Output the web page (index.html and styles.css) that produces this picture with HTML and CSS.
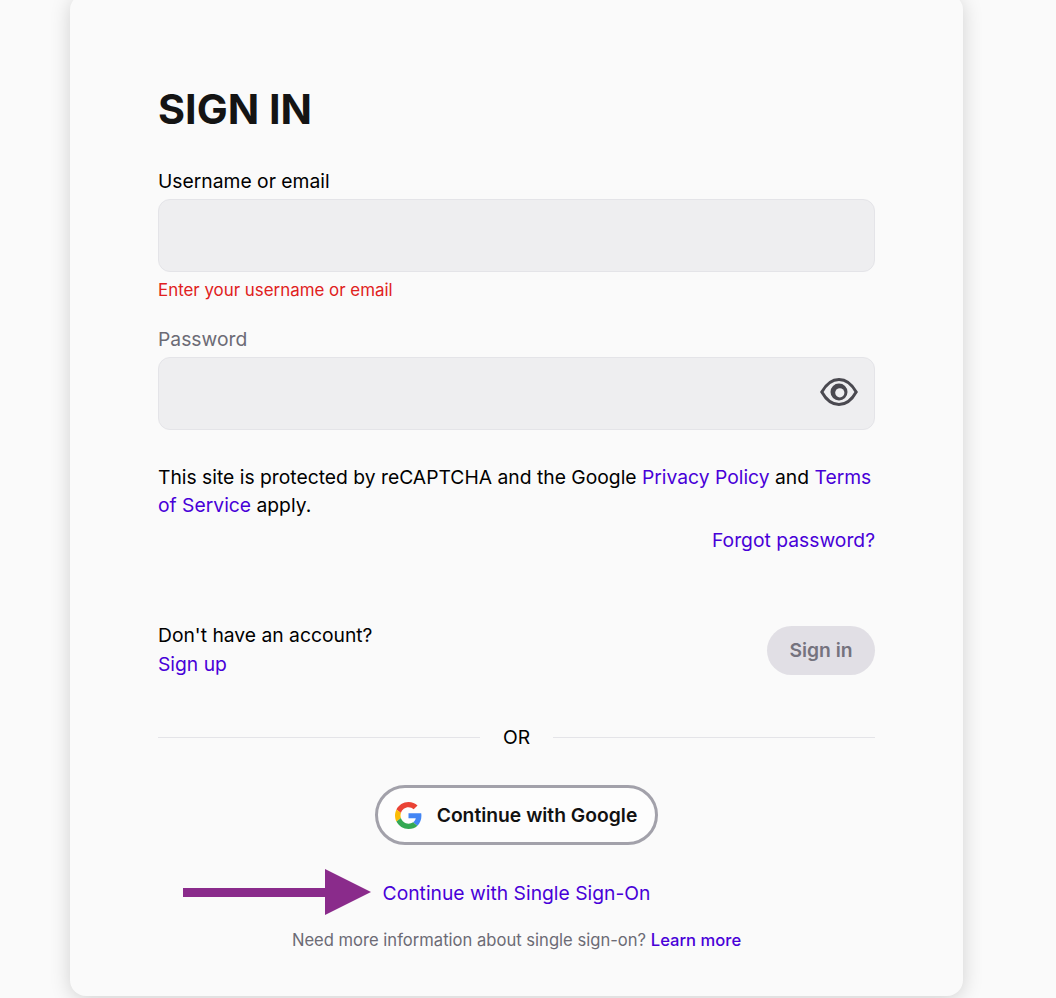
FILE: index.html
```html
<!DOCTYPE html>
<html lang="en">
<head>
    <meta charset="UTF-8">
    <meta name="viewport" content="width=device-width, initial-scale=1.0">
    <title>Sign in</title>
    <link rel="stylesheet" href="styles.css">
</head>
<body>
    <div class="container">
        <div class="card">
            <h1 class="card-title">SIGN IN</h1>

            <form class="login-form">
                <div class="form-group">
                    <label class="form-label" for="username">Username or email</label>
                    <input type="text" class="form-control" id="username">
                    <div class="form-error">Enter your username or email</div>
                </div>

                <div class="form-group">
                    <label class="form-label form-label-muted" for="password">Password</label>
                    <div class="password-box">
                        <input type="password" class="form-control" id="password">
                        <svg class="eye-icon" width="38" height="30" viewBox="0 0 38 30" fill="none" stroke="#4a4950" stroke-width="3">
                            <path d="M1.8 15 C6 7.500 12 2.500 19 2.500 C26 2.500 32 7.500 36.2 15 C32 22.500 26 27.500 19 27.500 C12 27.500 6 22.500 1.800 15 Z"></path>
                            <circle cx="19" cy="15" r="7" fill="#4a4950"></circle>
                            <circle cx="19.800" cy="15.800" r="4.600" fill="#eeeef0" stroke="none"></circle>
                        </svg>
                    </div>
                </div>

                <p class="recaptcha-note">This site is protected by reCAPTCHA and the Google <a href="#">Privacy Policy</a> and <a href="#">Terms of Service</a> apply.</p>

                <div class="forgot-row"><a href="#">Forgot password?</a></div>

                <div class="action-row">
                    <div class="signup-note">
                        <div>Don't have an account?</div>
                        <a href="#">Sign up</a>
                    </div>
                    <button type="button" class="submit-button">Sign in</button>
                </div>
            </form>

            <div class="divider">
                <span class="divider-line"></span>
                <span class="divider-text">OR</span>
                <span class="divider-line"></span>
            </div>

            <div class="google-row">
                <button type="button" class="google-button">
                    <svg width="27" height="27" viewBox="0 0 48 48">
                        <path fill="#EA4335" d="M24 9.500c3.540 0 6.710 1.220 9.210 3.600l6.850-6.850C35.900 2.380 30.470 0 24 0 14.620 0 6.510 5.380 2.560 13.220l7.980 6.190C12.430 13.720 17.740 9.500 24 9.500z"></path>
                        <path fill="#4285F4" d="M46.980 24.550c0-1.570-.15-3.090-.38-4.550H24v9.020h12.940c-.58 2.960-2.260 5.480-4.780 7.180l7.730 6c4.510-4.180 7.090-10.360 7.090-17.650z"></path>
                        <path fill="#FBBC05" d="M10.530 28.590c-.48-1.450-.76-2.990-.76-4.590s.27-3.140.76-4.590l-7.980-6.190C.92 16.460 0 20.120 0 24c0 3.880.92 7.540 2.560 10.780l7.970-6.190z"></path>
                        <path fill="#34A853" d="M24 48c6.480 0 11.930-2.130 15.890-5.810l-7.730-6c-2.150 1.450-4.920 2.300-8.160 2.300-6.260 0-11.570-4.220-13.470-9.910l-7.980 6.190C6.510 42.620 14.620 48 24 48z"></path>
                    </svg>
                    Continue with Google
                </button>
            </div>

            <div class="sso-row">
                <svg class="sso-arrow" width="188" height="46" viewBox="0 0 188 46">
                    <polygon points="0,19 142,19 142,0 188,23 142,46 142,28 0,28" fill="#8a2b8b"></polygon>
                </svg>
                <a href="#">Continue with Single Sign-On</a>
            </div>

            <p class="sso-help">Need more information about single sign-on? <a href="#">Learn more</a></p>
        </div>
    </div>
</body>
</html>
```

FILE: styles.css
```css
body {
    margin: 0;
    padding: 0;
    height: 998px;
    overflow: hidden;
    background-color: #fafafa;
    font-family: Inter, "Liberation Sans", sans-serif;
    color: #000;
}

a {
    color: #4800d8;
    text-decoration: none;
}

.container {
    padding-left: 70px;
}

.card {
    width: 893px;
    box-sizing: border-box;
    height: 1002px;
    margin-top: -6px;
    padding: 91px 88px 0;
    background-color: #fafafa;
    border-radius: 16px;
    box-shadow: 0 3px 20px rgba(0, 0, 0, 0.17);
}

.card-title {
    margin: 0;
    font-size: 41.3px;
    line-height: 48px;
    font-weight: 700;
    color: #141414;
}

.login-form {
    margin-top: 35px;
}

.form-group {
    margin-bottom: 24px;
}

.form-label {
    display: block;
    font-size: 19.3px;
    line-height: 26px;
    margin-bottom: 5px;
}

.form-label-muted {
    color: #6c6b75;
}

.form-control {
    display: block;
    width: 100%;
    height: 73px;
    box-sizing: border-box;
    background-color: #eeeef0;
    border: 1px solid #e4e4e8;
    border-radius: 12px;
}

.form-error {
    margin-top: 6px;
    font-size: 16.9px;
    line-height: 24px;
    color: #e02020;
}

.password-box {
    position: relative;
}

.eye-icon {
    position: absolute;
    top: 20px;
    right: 17px;
}

.recaptcha-note {
    margin: 33px 0 0;
    font-size: 19.3px;
    line-height: 28px;
}

.forgot-row {
    margin-top: 7px;
    text-align: right;
    font-size: 19.3px;
    line-height: 29px;
}

.action-row {
    margin-top: 66px;
    display: flex;
    justify-content: space-between;
    align-items: center;
}

.signup-note {
    font-size: 19.3px;
    line-height: 29px;
}

.submit-button {
    width: 108px;
    height: 49px;
    padding: 0;
    border: none;
    border-radius: 25px;
    background-color: #e1dfe5;
    color: #75737e;
    font-family: inherit;
    font-size: 19.3px;
    font-weight: 600;
}

.divider {
    margin-top: 44px;
    display: flex;
    align-items: center;
    gap: 23px;
}

.divider-line {
    flex: 1;
    height: 1px;
    background-color: #e4e4e8;
}

.divider-text {
    font-size: 19.3px;
    line-height: 29px;
}

.google-row {
    margin-top: 33px;
    display: flex;
    justify-content: center;
}

.google-button {
    display: flex;
    align-items: center;
    gap: 15px;
    height: 60px;
    padding: 0 18px 0 17px;
    box-sizing: border-box;
    background-color: #fdfdfd;
    border: 3px solid #a2a1aa;
    border-radius: 30px;
    color: #111;
    font-family: inherit;
    font-size: 19.3px;
    font-weight: 600;
}

.sso-row {
    position: relative;
    margin-top: 34px;
    text-align: center;
    font-size: 19.3px;
    line-height: 29px;
}

.sso-arrow {
    position: absolute;
    left: 25px;
    top: -10px;
}

.sso-help {
    margin: 20px 0 0;
    text-align: center;
    font-size: 16.6px;
    line-height: 24px;
    color: #6c6b75;
}

.sso-help a {
    font-weight: 500;
}
```
